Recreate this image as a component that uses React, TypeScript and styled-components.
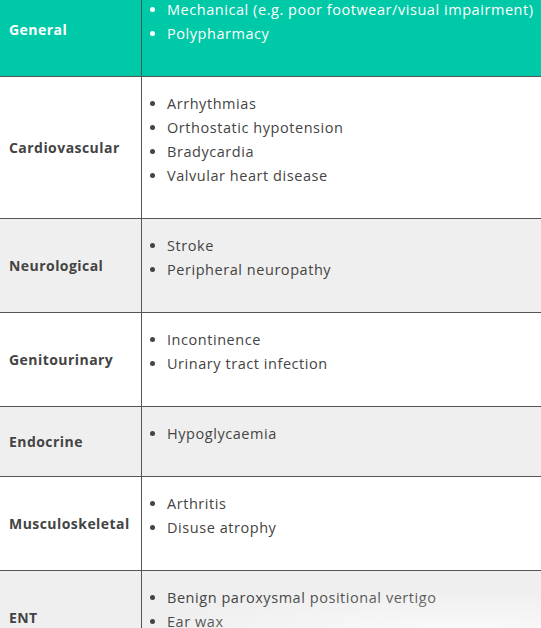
import React from 'react';
import styled, { createGlobalStyle } from 'styled-components';

const GlobalStyle = createGlobalStyle`
  html, body {
    margin: 0;
    padding: 0;
    background: #ffffff;
    overflow: hidden;
  }
  body {
    font-family: "Open Sans", "Noto Sans", sans-serif;
  }
`;

type Row = { label: string; items: string[] };

const rows: Row[] = [
  { label: 'General', items: ['Mechanical (e.g. poor footwear/visual impairment)', 'Polypharmacy'] },
  { label: 'Cardiovascular', items: ['Arrhythmias', 'Orthostatic hypotension', 'Bradycardia', 'Valvular heart disease'] },
  { label: 'Neurological', items: ['Stroke', 'Peripheral neuropathy'] },
  { label: 'Genitourinary', items: ['Incontinence', 'Urinary tract infection'] },
  { label: 'Endocrine', items: ['Hypoglycaemia'] },
  { label: 'Musculoskeletal', items: ['Arthritis', 'Disuse atrophy'] },
  { label: 'ENT', items: ['Benign paroxysmal positional vertigo', 'Ear wax'] },
];

const Page = styled.div`
  width: 541px;
  height: 628px;
  overflow: hidden;
  position: relative;
`;

const Table = styled.table`
  width: 541px;
  table-layout: fixed;
  border-collapse: collapse;
  margin-top: -17px;
`;

const Tr = styled.tr<{ $tone: 'head' | 'plain' | 'grey' }>`
  background: ${(p) => (p.$tone === 'head' ? '#00c9a7' : p.$tone === 'grey' ? '#efefef' : '#ffffff')};
  color: ${(p) => (p.$tone === 'head' ? '#ffffff' : '#444444')};
  border-bottom: 1px solid #555555;
`;

const Label = styled.td`
  width: 132px;
  padding: 0 0 0 9px;
  border-right: 1px solid #555555;
  font-weight: 700;
  font-size: 14px;
  letter-spacing: 0.45px;
  white-space: nowrap;
  vertical-align: middle;
`;

const Cell = styled.td`
  padding: 15px 0 15px 10px;
  vertical-align: top;
`;

const List = styled.ul`
  margin: 0 0 15px 0;
  padding-left: 15px;
  list-style: disc;
`;

const Item = styled.li`
  font-size: 14.5px;
  line-height: 24px;
  letter-spacing: 0.55px;
  white-space: nowrap;
`;

const Fade = styled.div`
  position: absolute;
  left: 0;
  right: 0;
  bottom: 0;
  height: 50px;
  pointer-events: none;
  background: radial-gradient(ellipse 60% 100% at 85% 120%, rgba(255, 255, 255, 0.75), rgba(255, 255, 255, 0));
`;

export default function App() {
  return (
    <Page>
      <GlobalStyle />
      <Table>
        <tbody>
          {rows.map((r, i) => (
            <Tr key={r.label} $tone={i === 0 ? 'head' : i % 2 === 0 ? 'grey' : 'plain'}>
              <Label>{r.label}</Label>
              <Cell>
                <List>
                  {r.items.map((it) => (
                    <Item key={it}>{it}</Item>
                  ))}
                </List>
              </Cell>
            </Tr>
          ))}
        </tbody>
      </Table>
      <Fade />
    </Page>
  );
}
